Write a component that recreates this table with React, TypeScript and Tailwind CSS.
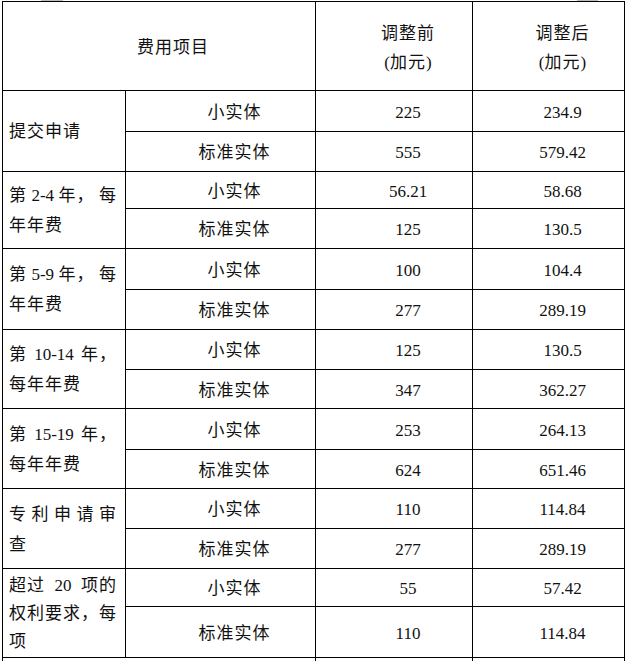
type Line = string | string[];

interface Group {
  label: Line[];
  leading: string;
  rows: [string, string, string][];
}

const GROUPS: Group[] = [
  {
    label: ['提交申请'],
    leading: 'leading-[30px]',
    rows: [
      ['小实体', '225', '234.9'],
      ['标准实体', '555', '579.42'],
    ],
  },
  {
    label: [['第', '2-4', '年，', '每'], '年年费'],
    leading: 'leading-[30px]',
    rows: [
      ['小实体', '56.21', '58.68'],
      ['标准实体', '125', '130.5'],
    ],
  },
  {
    label: [['第', '5-9', '年，', '每'], '年年费'],
    leading: 'leading-[30px]',
    rows: [
      ['小实体', '100', '104.4'],
      ['标准实体', '277', '289.19'],
    ],
  },
  {
    label: [['第', '10-14', '年，'], '每年年费'],
    leading: 'leading-[30px]',
    rows: [
      ['小实体', '125', '130.5'],
      ['标准实体', '347', '362.27'],
    ],
  },
  {
    label: [['第', '15-19', '年，'], '每年年费'],
    leading: 'leading-[30px]',
    rows: [
      ['小实体', '253', '264.13'],
      ['标准实体', '624', '651.46'],
    ],
  },
  {
    label: [['专', '利', '申', '请', '审'], '查'],
    leading: 'leading-[30px]',
    rows: [
      ['小实体', '110', '114.84'],
      ['标准实体', '277', '289.19'],
    ],
  },
  {
    label: [['超过', '20', '项的'], '权利要求，每', '项'],
    leading: 'leading-[28px]',
    rows: [
      ['小实体', '55', '57.42'],
      ['标准实体', '110', '114.84'],
    ],
  },
];

function LabelLine({ line }: { line: Line }) {
  if (typeof line === 'string') return <div className="tracking-[1px]">{line}</div>;
  return (
    <div className="flex w-[108px] justify-between">
      {line.map((t, i) => (
        <span key={i} className={/\d/.test(t) ? '' : 'tracking-[1px]'}>
          {t}
        </span>
      ))}
    </div>
  );
}

function Cell({ children, className = '' }: { children?: React.ReactNode; className?: string }) {
  return (
    <div className={`flex items-center justify-center bg-white pl-7 pt-[3px] ${className}`}>
      {children}
    </div>
  );
}

export default function App() {
  return (
    <div className="h-[661px] w-[628px] overflow-hidden bg-white font-['Liberation_Serif','Noto_Sans_CJK_SC',serif] text-[17px] text-[#111]">
      {/* page marks above the table */}
      <div className="flex h-px">
        <div className="ml-[41px] w-[22px] bg-[#bdbdbd]" />
        <div className="ml-[514px] w-[21px] bg-[#bdbdbd]" />
      </div>

      <div className="ml-[2px] grid w-fit grid-cols-[122px_189px_156px_151px] grid-rows-[88px_40px_39px_36px_39px_40px_39px_39px_38px_40px_38px_39px_39px_37px_50px_40px] gap-px bg-black p-px">
        {/* Header */}
        <Cell className="col-span-2 tracking-[1px]">费用项目</Cell>
        <Cell className="flex-col leading-[29px]">
          <span className="tracking-[1px]">调整前</span>
          <span>
            (<span className="tracking-[1px]">加元</span>)
          </span>
        </Cell>
        <Cell className="flex-col leading-[29px]">
          <span className="tracking-[1px]">调整后</span>
          <span>
            (<span className="tracking-[1px]">加元</span>)
          </span>
        </Cell>

        {GROUPS.map((g, gi) => (
          <div key={gi} className="contents">
            <div className={`row-span-2 flex flex-col justify-center bg-white pl-[6px] pt-[2px] ${g.leading}`}>
              {g.label.map((line, li) => (
                <LabelLine key={li} line={line} />
              ))}
            </div>
            {g.rows.map(([type, before, after], ri) => (
              <div key={ri} className="contents">
                <Cell className="tracking-[1px]">{type}</Cell>
                <Cell>{before}</Cell>
                <Cell>{after}</Cell>
              </div>
            ))}
          </div>
        ))}

        {/* next row, cut off by the page edge */}
        <div className="col-span-2 bg-white" />
        <div className="bg-white" />
        <div className="bg-white" />
      </div>
    </div>
  );
}
